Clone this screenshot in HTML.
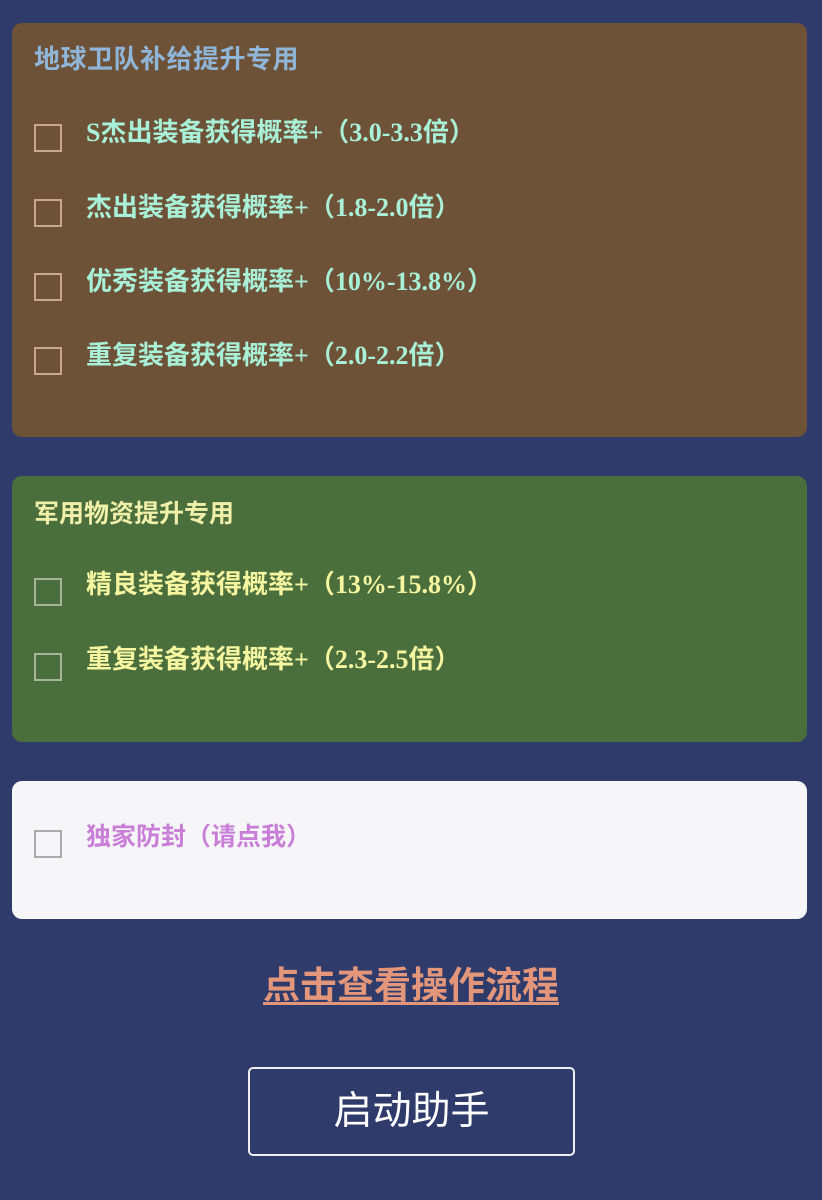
<!DOCTYPE html>
<html><head><meta charset="utf-8"><style>
body{margin:0;width:822px;height:1200px;background:#2f3b6b;position:relative;overflow:hidden;font-family:"Liberation Serif","Noto Sans CJK SC",sans-serif}
.p{position:absolute;left:12px;width:795px;border-radius:10px}
.t{position:absolute;left:22px;font:bold 26px "Liberation Sans","Noto Sans CJK SC",sans-serif;white-space:nowrap;letter-spacing:0}
.r{position:absolute;left:74px;font-weight:bold;font-size:26px;white-space:nowrap;line-height:30px}
.c{position:absolute;left:22px;width:28px;height:28px;border:2px solid #c9a892;box-sizing:border-box}
</style></head><body>
<div class="p" style="top:23px;height:414px;background:#6e5237">
<div class="t" style="top:16px;color:#8fb6d8;letter-spacing:0.5px">地球卫队补给提升专用</div>
<div class="c" style="top:101px"></div><div class="r" style="top:95px;color:#a8f0d8">S杰出装备获得概率+（3.0-3.3倍）</div>
<div class="c" style="top:176px"></div><div class="r" style="top:170px;color:#a8f0d8">杰出装备获得概率+（1.8-2.0倍）</div>
<div class="c" style="top:250px"></div><div class="r" style="top:244px;color:#a8f0d8">优秀装备获得概率+（10%-13.8%）</div>
<div class="c" style="top:324px"></div><div class="r" style="top:318px;color:#a8f0d8">重复装备获得概率+（2.0-2.2倍）</div>
</div>
<div class="p" style="top:476px;height:266px;background:#4b6e3d">
<div class="t" style="top:18px;color:#f0f0a8;font-size:25px">军用物资提升专用</div>
<div class="c" style="top:102px;border-color:#a9b59a"></div><div class="r" style="top:94px;color:#f6f6a0">精良装备获得概率+（13%-15.8%）</div>
<div class="c" style="top:177px;border-color:#a9b59a"></div><div class="r" style="top:169px;color:#f6f6a0">重复装备获得概率+（2.3-2.5倍）</div>
</div>
<div class="p" style="top:781px;height:138px;background:#f6f6f8">
<div class="c" style="top:49px;border-color:#aaa"></div><div class="r" style="top:41px;font-size:25px;color:#c97fd8;font-family:'Liberation Sans','Noto Sans CJK SC',sans-serif">独家防封（请点我）</div>
</div>
<div style="position:absolute;top:955px;left:0;width:822px;text-align:center;font:bold 37px 'Liberation Sans','Noto Sans CJK SC',sans-serif;color:#e3967a;text-decoration:underline;text-underline-offset:4px">点击查看操作流程</div>
<div style="position:absolute;left:248px;top:1067px;width:327px;height:89px;box-sizing:border-box;border:2px solid #eee;border-radius:5px;color:#fff;font:39px 'Liberation Sans','Noto Sans CJK SC',sans-serif;text-align:center;line-height:85px">启动助手</div>
</body></html>
